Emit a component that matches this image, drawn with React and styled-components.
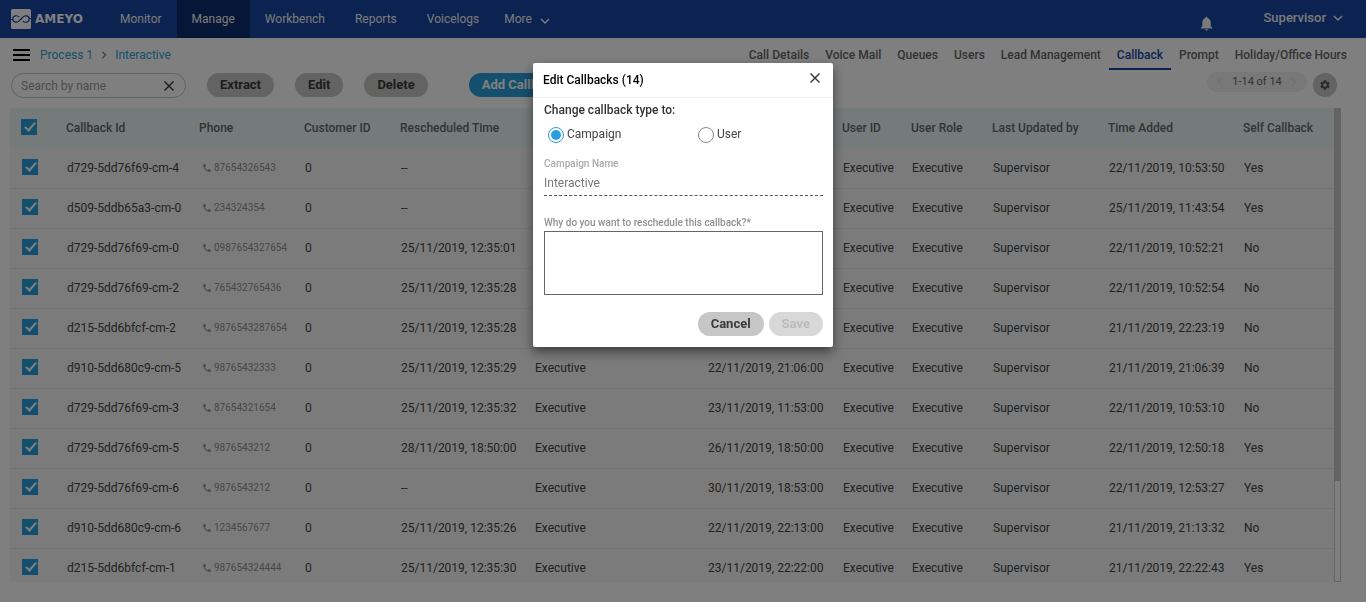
import React from "react";
import styled, { createGlobalStyle } from "styled-components";
import { MdNotifications, MdPhone, MdSettings } from "react-icons/md";

const GlobalStyle = createGlobalStyle`
  *, *::before, *::after { box-sizing: border-box; }
  html, body { height: 100%; }
  body {
    margin: 0;
    overflow: hidden;
    background: #fff;
    color: #444;
    font: 400 12px/16px Roboto, "Liberation Sans", sans-serif;
  }
  #root { height: 100%; }
  button, input, textarea { font: inherit; color: inherit; }
  a { color: inherit; text-decoration: none; }
`;

const Page = styled.div`
  display: flex;
  flex-direction: column;
  height: 100%;
`;

const TopBar = styled.header`
  display: flex;
  align-items: stretch;
  flex: none;
  height: 38px;
  padding: 0 23px 0 11px;
  background: #1845a0;
  color: #f4f4f4;
`;

const Logo = styled.a`
  display: flex;
  align-items: center;
  gap: 4px;
  width: 94px;
  color: #fff;
  font: 700 12px/16px "DejaVu Sans", sans-serif;
`;

const Nav = styled.nav`
  display: flex;
  flex: 1;
`;

const NavLink = styled.a`
  display: flex;
  align-items: center;
  gap: 8px;
  padding: 0 15px;
  background: ${(p) => (p.$active ? "#0c2d6c" : "transparent")};
`;

const MoreLink = styled(NavLink)`
  padding: 0 10px;
  svg { margin-top: 4px; }
`;

const BellButton = styled.button`
  display: flex;
  align-items: flex-end;
  margin-right: 48px;
  padding: 0 0 6px;
  border: 0;
  background: none;
`;

const UserButton = styled.button`
  display: flex;
  align-items: center;
  gap: 7px;
  padding: 0 0 2px;
  border: 0;
  background: none;
  font-size: 13px;
  font-weight: 500;
`;

const SubBar = styled.div`
  display: flex;
  justify-content: space-between;
  flex: none;
  height: 35px;
  padding: 0 11px 0 12px;
`;

const Crumbs = styled.nav`
  display: flex;
  align-items: center;
  height: 34px;
  gap: 7px;
  color: #2a9fdc;
`;

const MenuButton = styled.button`
  display: flex;
  padding: 0;
  border: 0;
  background: none;
  margin-right: 3px;
`;

const Tabs = styled.nav`
  display: flex;
  height: 32px;
`;

const Tab = styled.a`
  display: flex;
  align-items: center;
  padding: 4px 8px 0;
  border-bottom: 2px solid ${(p) => (p.$active ? "#1845a0" : "transparent")};
  color: ${(p) => (p.$active ? "#1845a0" : "#666")};
  font-weight: 500;
`;

const Toolbar = styled.div`
  display: flex;
  align-items: flex-start;
  flex: none;
  height: 35px;
  padding: 0 29px 0 11px;
`;

const SearchBox = styled.div`
  display: flex;
  align-items: center;
  width: 175px;
  height: 25px;
  margin-right: 21px;
  padding: 0 11px 0 9px;
  border: 1px solid #c4c4c4;
  border-radius: 13px;
`;

const SearchInput = styled.input`
  flex: 1;
  min-width: 0;
  padding: 0;
  border: 0;
  outline: 0;
  background: none;
  &::placeholder { color: #999; opacity: 1; }
`;

const IconButton = styled.button`
  display: flex;
  padding: 0;
  border: 0;
  background: none;
`;

const PillButton = styled.button`
  height: 24px;
  padding: 0 13px;
  border: 0;
  border-radius: 12px;
  background: ${(p) => (p.$primary ? "#2a9fdc" : "#c6c6c6")};
  color: ${(p) => (p.$primary ? "#fff" : "#3a3a3a")};
  font-size: 13px;
  font-weight: 700;
  line-height: 16px;
  &:disabled { background: #d8d8d8; color: #bbb; }
`;

const Actions = styled.div`
  display: flex;
  flex: 1;
  gap: 21px;
  & > :last-child { margin-left: 20px; }
`;

const Pager = styled.div`
  display: flex;
  align-items: center;
  justify-content: space-between;
  width: 100px;
  height: 20px;
  margin: -1px 6px 0 0;
  padding: 0 9px;
  border-radius: 10px;
  background: #f0f0f0;
  color: #666;
  font-size: 11px;
`;

const GearButton = styled.button`
  display: flex;
  align-items: center;
  justify-content: center;
  width: 24px;
  height: 24px;
  padding: 0;
  border: 0;
  border-radius: 50%;
  background: #c6c6c6;
  color: #555;
`;

const TableArea = styled.main`
  display: flex;
  flex: 1;
  min-height: 0;
  margin: 0 25px 20px 10px;
`;

const TableClip = styled.div`
  flex: 1;
  overflow: hidden;
`;

const ScrollTrack = styled.div`
  width: 7px;
  border: 1px solid #c8c8c8;
`;

const ScrollThumb = styled.div`
  height: 79%;
  margin: -1px;
  background: #c8c8c8;
`;

const Table = styled.table`
  width: 100%;
  table-layout: fixed;
  border-collapse: separate;
  border-spacing: 0;
  background: #f7f7f7;
`;

const Col = styled.col`
  width: ${(p) => p.$w}px;
`;

const Th = styled.th`
  height: 40px;
  padding: 0 0 0 11px;
  background: #eaf6f6;
  color: #666;
  font-weight: 500;
  text-align: left;
  white-space: nowrap;
`;

const Td = styled.td`
  height: 40px;
  padding: 0 0 0 12px;
  white-space: nowrap;
  tr + tr > & {
    padding-bottom: 2px;
    border-top: 1px solid #e4e4e4;
  }
`;

const Phone = styled.span`
  display: flex;
  align-items: center;
  gap: 2px;
  padding-left: 2px;
  color: #8f8f8f;
  font-size: 10px;
`;

const Check = styled.input`
  display: block;
  appearance: none;
  width: 16px;
  height: 16px;
  margin: 0 0 2px;
  background: #2a9fdc;
  &::after {
    content: "";
    display: block;
    width: 6px;
    height: 11px;
    margin: 1px 0 0 6px;
    border: solid #fff;
    border-width: 0 2px 2px 0;
    transform: rotate(40deg);
  }
`;

const Overlay = styled.div`
  position: fixed;
  inset: 0;
  display: flex;
  align-items: flex-start;
  justify-content: center;
  padding-top: 63px;
  background: rgba(0, 0, 0, 0.5);
`;

const Dialog = styled.section`
  width: 300px;
  border-radius: 2px;
  background: #fff;
  box-shadow: 0 5px 12px rgba(0, 0, 0, 0.5);
`;

const DialogHeader = styled.header`
  display: flex;
  align-items: flex-start;
  justify-content: space-between;
  height: 35px;
  padding: 9px 13px 0 10px;
  border-bottom: 1px solid #eee;
  ${IconButton} { padding-top: 1px; }
`;

const DialogTitle = styled.h2`
  margin: 0;
  color: #000;
  font-size: 12px;
  font-weight: 500;
`;

const DialogBody = styled.form`
  display: flex;
  flex-direction: column;
  padding: 4px 10px 11px 11px;
`;

const RadioGroup = styled.fieldset`
  display: grid;
  grid-template-columns: 150px 1fr;
  row-gap: 8px;
  margin: 0;
  padding: 0 0 0 4px;
  border: 0;
`;

const Legend = styled.legend`
  float: left;
  grid-column: 1 / -1;
  margin-left: -4px;
  padding: 0;
  color: #333;
  font-weight: 500;
`;

const RadioLabel = styled.label`
  display: flex;
  gap: 3px;
`;

const Radio = styled.input`
  appearance: none;
  width: 16px;
  height: 16px;
  margin: 1px 0 0;
  padding: 2px;
  border: 1px solid #888;
  border-radius: 50%;
  background-clip: content-box;
  &:checked {
    border-color: #2a9fe0;
    background-color: #2a9fe0;
  }
`;

const FieldLabel = styled.label`
  margin-top: ${(p) => p.$gap}px;
  color: ${(p) => (p.$dark ? "#909090" : "#aaa")};
  font-size: 10px;
  font-weight: 500;
`;

const ReadOnlyInput = styled.input`
  width: 100%;
  height: 24px;
  padding: 0 0 2px;
  border: 0;
  border-bottom: 1px dashed #555;
  outline: 0;
  background: none;
  color: #777;
`;

const Reason = styled.textarea`
  height: 64px;
  border: 1px solid #666;
  outline: 0;
  resize: none;
`;

const DialogActions = styled.footer`
  display: flex;
  justify-content: flex-end;
  gap: 5px;
  margin-top: 17px;
`;

const Cross = ({ size = 10, color = "#333", width = 1.4 }) => (
  <svg width={size} height={size} viewBox="0 0 10 10" stroke={color} strokeWidth={width} aria-hidden="true">
    <path d="M.5.5l9 9M9.5.5l-9 9" />
  </svg>
);

const Chevron = ({ size = 10, color = "currentColor", turn = 0, width = 1.5 }) => (
  <svg width={size} height={size} viewBox="0 0 10 10" fill="none" stroke={color} strokeWidth={width} aria-hidden="true">
    <path d="M1 3l4 4 4-4" transform={`rotate(${turn} 5 5)`} />
  </svg>
);

const LogoMark = () => (
  <svg width="20" height="20" viewBox="0 0 20 20" fill="none" aria-hidden="true">
    <rect width="20" height="20" rx="1.5" fill="#fff" />
    <path
      d="M0 10.5H1.800C2 13.500 6.500 14 8.500 11.500L11.500 8.500C13.500 6 18 6.500 18.200 9.500H20M1.800 10C1.800 6.500 6 5.800 8.200 8.200M11.800 11.800C14 14.200 18.200 13.500 18.200 10"
      stroke="#1845a0"
      strokeWidth="1.2"
    />
  </svg>
);

const tabs = ["Call Details", "Voice Mail", "Queues", "Users", "Lead Management", "Callback", "Prompt", "Holiday/Office Hours"];

const columns = [
  ["id", "Callback Id", 133],
  ["phone", "Phone", 105],
  ["customer", "Customer ID", 96],
  ["rescheduled", "Rescheduled Time", 134],
  ["assignee", "", 173],
  ["due", "", 135],
  ["user", "User ID", 69],
  ["role", "User Role", 81],
  ["updatedBy", "Last Updated by", 116],
  ["added", "Time Added", 135],
  ["self", "Self Callback", 102],
];

const rows = [
  ["d729-5dd76f69-cm-4", "87654326543", "--", "", "", "22/11/2019, 10:53:50", "Yes"],
  ["d509-5ddb65a3-cm-0", "234324354", "--", "", "", "25/11/2019, 11:43:54", "Yes"],
  ["d729-5dd76f69-cm-0", "0987654327654", "25/11/2019, 12:35:01", "", "", "22/11/2019, 10:52:21", "No"],
  ["d729-5dd76f69-cm-2", "765432765436", "25/11/2019, 12:35:28", "", "", "22/11/2019, 10:52:54", "No"],
  ["d215-5dd6bfcf-cm-2", "9876543287654", "25/11/2019, 12:35:28", "", "", "21/11/2019, 22:23:19", "No"],
  ["d910-5dd680c9-cm-5", "98765432333", "25/11/2019, 12:35:29", "Executive", "22/11/2019, 21:06:00", "21/11/2019, 21:06:39", "No"],
  ["d729-5dd76f69-cm-3", "87654321654", "25/11/2019, 12:35:32", "Executive", "23/11/2019, 11:53:00", "22/11/2019, 10:53:10", "No"],
  ["d729-5dd76f69-cm-5", "9876543212", "28/11/2019, 18:50:00", "Executive", "26/11/2019, 18:50:00", "22/11/2019, 12:50:18", "Yes"],
  ["d729-5dd76f69-cm-6", "9876543212", "--", "Executive", "30/11/2019, 18:53:00", "22/11/2019, 12:53:27", "Yes"],
  ["d910-5dd680c9-cm-6", "1234567677", "25/11/2019, 12:35:26", "Executive", "22/11/2019, 22:13:00", "21/11/2019, 21:13:32", "No"],
  ["d215-5dd6bfcf-cm-1", "987654324444", "25/11/2019, 12:35:30", "Executive", "23/11/2019, 22:22:00", "21/11/2019, 22:22:43", "Yes"],
];

function CallbackTable() {
  return (
    <TableArea>
      <TableClip>
        <Table>
          <colgroup>
            <Col $w={45} />
            {columns.map(([key, , w]) => <Col key={key} $w={w} />)}
          </colgroup>
          <thead>
            <tr>
              <Th><Check type="checkbox" defaultChecked aria-label="Select all" /></Th>
              {columns.map(([key, name]) => <Th key={key}>{name}</Th>)}
            </tr>
          </thead>
          <tbody>
            {rows.map(([id, phone, rescheduled, assignee, due, added, self]) => (
              <tr key={id}>
                <Td><Check type="checkbox" defaultChecked aria-label={`Select ${id}`} /></Td>
                <Td>{id}</Td>
                <Td><Phone><MdPhone size={10} />{phone}</Phone></Td>
                <Td>0</Td>
                <Td>{rescheduled}</Td>
                <Td>{assignee}</Td>
                <Td>{due}</Td>
                <Td>Executive</Td>
                <Td>Executive</Td>
                <Td>Supervisor</Td>
                <Td>{added}</Td>
                <Td>{self}</Td>
              </tr>
            ))}
          </tbody>
        </Table>
      </TableClip>
      <ScrollTrack><ScrollThumb /></ScrollTrack>
    </TableArea>
  );
}

function EditDialog() {
  return (
    <Overlay>
      <Dialog role="dialog" aria-modal="true" aria-labelledby="dialog-title">
        <DialogHeader>
          <DialogTitle id="dialog-title">Edit Callbacks (14)</DialogTitle>
          <IconButton aria-label="Close"><Cross /></IconButton>
        </DialogHeader>
        <DialogBody>
          <RadioGroup>
            <Legend>Change callback type to:</Legend>
            <RadioLabel><Radio type="radio" name="kind" defaultChecked />Campaign</RadioLabel>
            <RadioLabel><Radio type="radio" name="kind" />User</RadioLabel>
          </RadioGroup>
          <FieldLabel htmlFor="campaign" $gap={13}>Campaign Name</FieldLabel>
          <ReadOnlyInput id="campaign" readOnly value="Interactive" />
          <FieldLabel htmlFor="reason" $gap={19} $dark>Why do you want to reschedule this callback?*</FieldLabel>
          <Reason id="reason" />
          <DialogActions>
            <PillButton type="button">Cancel</PillButton>
            <PillButton type="button" disabled>Save</PillButton>
          </DialogActions>
        </DialogBody>
      </Dialog>
    </Overlay>
  );
}

export default function App() {
  return (
    <>
      <GlobalStyle />
      <Page>
        <TopBar>
          <Logo href="#"><LogoMark />AMEYO</Logo>
          <Nav>
            <NavLink href="#">Monitor</NavLink>
            <NavLink href="#" $active>Manage</NavLink>
            <NavLink href="#">Workbench</NavLink>
            <NavLink href="#">Reports</NavLink>
            <NavLink href="#">Voicelogs</NavLink>
            <MoreLink href="#">More<Chevron /></MoreLink>
          </Nav>
          <BellButton aria-label="Notifications"><MdNotifications size={17} /></BellButton>
          <UserButton>Supervisor<Chevron /></UserButton>
        </TopBar>
        <SubBar>
          <Crumbs>
            <MenuButton aria-label="Menu">
              <svg width="18" height="12" viewBox="0 0 18 12" aria-hidden="true">
                <path d="M1 1h17M1 6h17M1 11h17" stroke="#000" strokeWidth="2" />
              </svg>
            </MenuButton>
            <a href="#">Process 1</a>
            <Chevron size={8} color="#777" turn={-90} />
            <a href="#">Interactive</a>
          </Crumbs>
          <Tabs>
            {tabs.map((name) => <Tab key={name} href="#" $active={name === "Callback"}>{name}</Tab>)}
          </Tabs>
        </SubBar>
        <Toolbar>
          <SearchBox>
            <SearchInput placeholder="Search by name" aria-label="Search by name" />
            <IconButton aria-label="Clear search"><Cross /></IconButton>
          </SearchBox>
          <Actions>
            <PillButton>Extract</PillButton>
            <PillButton>Edit</PillButton>
            <PillButton>Delete</PillButton>
            <PillButton $primary>Add Callback</PillButton>
          </Actions>
          <Pager>
            <Chevron size={8} color="#ccc" turn={90} width={1.2} />
            1-14 of 14
            <Chevron size={8} color="#ccc" turn={-90} width={1.2} />
          </Pager>
          <GearButton aria-label="Table settings"><MdSettings size={12} /></GearButton>
        </Toolbar>
        <CallbackTable />
      </Page>
      <EditDialog />
    </>
  );
}
